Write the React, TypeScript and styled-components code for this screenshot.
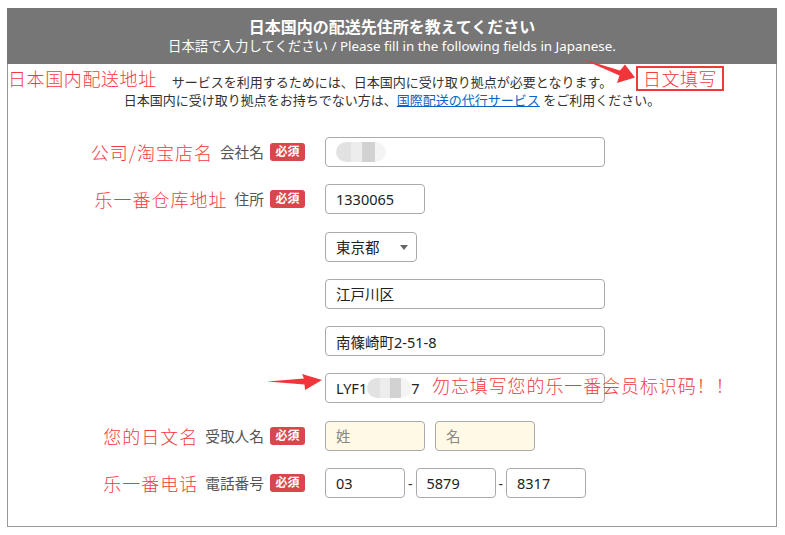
import styled, { createGlobalStyle } from 'styled-components'

const GlobalStyle = createGlobalStyle`
  body {
    margin: 0;
    background: #fff;
    font-family: "Noto Sans", "Noto Sans CJK JP", sans-serif;
    color: #333;
  }
`

const RED = '#f43a40'

const App = () => {
  return (
    <Page>
      <GlobalStyle />
      <Panel>
        <Header>
          <Title>日本国内の配送先住所を教えてください</Title>
          <Subtitle>
            日本語で入力してください / Please fill in the following fields in Japanese.
          </Subtitle>
        </Header>

        <Intro>
          <p>サービスを利用するためには、日本国内に受け取り拠点が必要となります。</p>
          <p>
            日本国内に受け取り拠点をお持ちでない方は、
            <IntroLink href="#">国際配送の代行サービス</IntroLink> をご利用ください。
          </p>
        </Intro>

        <Form>
          <Row>
            <LabelCell>
              <Note>公司/淘宝店名</Note>
              <FieldLabel>会社名</FieldLabel>
              <Badge>必須</Badge>
            </LabelCell>
            <FauxInput $width={280}>
              <Smudge $width={50} />
            </FauxInput>
          </Row>

          <Row>
            <LabelCell>
              <Note>乐一番仓库地址</Note>
              <FieldLabel>住所</FieldLabel>
              <Badge>必須</Badge>
            </LabelCell>
            <Stack>
              <TextInput $width={100} defaultValue="1330065" />
              <SelectWrap>
                <Select defaultValue="tokyo">
                  <option value="tokyo">東京都</option>
                </Select>
              </SelectWrap>
              <TextInput $width={280} defaultValue="江戸川区" />
              <TextInput $width={280} defaultValue="南篠崎町2-51-8" />
              <ReminderSlot>
                <FauxInput $width={280}>
                  <span>LYF1</span>
                  <Smudge $width={44} />
                  <span>7</span>
                </FauxInput>
                <Reminder>勿忘填写您的乐一番会员标识码！！</Reminder>
              </ReminderSlot>
            </Stack>
          </Row>

          <Row>
            <LabelCell>
              <Note>您的日文名</Note>
              <FieldLabel>受取人名</FieldLabel>
              <Badge>必須</Badge>
            </LabelCell>
            <Inline $gap={10}>
              <TextInput $width={100} $tint placeholder="姓" />
              <TextInput $width={100} $tint placeholder="名" />
            </Inline>
          </Row>

          <Row>
            <LabelCell>
              <Note>乐一番电话</Note>
              <FieldLabel>電話番号</FieldLabel>
              <Badge>必須</Badge>
            </LabelCell>
            <Inline $gap={3}>
              <TextInput $width={80} defaultValue="03" />
              <Dash>-</Dash>
              <TextInput $width={80} defaultValue="5879" />
              <Dash>-</Dash>
              <TextInput $width={80} defaultValue="8317" />
            </Inline>
          </Row>
        </Form>
      </Panel>

      <Callout>日本国内配送地址</Callout>
      <Tag>日文填写</Tag>

      <Arrows width="785" height="535" viewBox="0 0 785 535">
        <polygon points="582,59 620,70.5 625,64.5 635,77.5 617,83 619.5,75.5" fill="#f2353a" />
        <polygon points="267,381.5 304,378.5 302,374 322,380 305,390 304.5,384.5" fill="#f2353a" />
      </Arrows>
    </Page>
  )
}

export default App

const Page = styled.div`
  position: relative;
  width: 785px;
  height: 535px;
  overflow: hidden;
`

const Panel = styled.div`
  margin: 8px 0 0 7px;
  width: 770px;
  box-sizing: border-box;
  border: 1px solid #999;
  border-top: none;
  padding-bottom: 28px;
`

const Header = styled.div`
  background: #767676;
  color: #fff;
  text-align: center;
  height: 56px;
  padding-top: 9px;
  box-sizing: border-box;
  margin: 0 -1px;
`

const Title = styled.div`
  font-size: 16px;
  font-weight: 700;
  line-height: 20px;
`

const Subtitle = styled.div`
  font-size: 13.4px;
  line-height: 18px;
`

const Intro = styled.div`
  padding-top: 9px;
  text-align: center;
  font-size: 13px;
  line-height: 18px;
  color: #333;

  p {
    margin: 0;
  }
`

const IntroLink = styled.a`
  color: #0a64c8;
  text-decoration: underline;
`

const Form = styled.div`
  margin-top: 28px;
  display: flex;
  flex-direction: column;
  gap: 17.3px;
`

const Row = styled.div`
  display: grid;
  grid-template-columns: 297px 1fr;
  column-gap: 20px;
  align-items: start;
`

const LabelCell = styled.div`
  height: 30px;
  display: flex;
  align-items: center;
  justify-content: flex-end;
  gap: 6px;
`

const Note = styled.span`
  color: ${RED};
  font-family: "Noto Sans CJK SC", sans-serif;
  font-size: 18px;
  font-weight: 300;
  letter-spacing: 1px;
  margin-right: 1px;
  line-height: 24px;
`

const FieldLabel = styled.span`
  color: #555;
  font-size: 14.7px;
  line-height: 20px;
`

const Badge = styled.span`
  background: #d9474a;
  color: #fff;
  font-size: 12px;
  font-weight: 700;
  line-height: 18px;
  height: 18px;
  padding: 0 5.5px;
  border-radius: 3px;
`

const Stack = styled.div`
  display: flex;
  flex-direction: column;
  gap: 17.3px;
`

const Inline = styled.div<{ $gap: number }>`
  display: flex;
  align-items: center;
  gap: ${(p) => p.$gap}px;
`

const TextInput = styled.input<{ $width: number; $tint?: boolean }>`
  width: ${(p) => p.$width}px;
  height: 30px;
  box-sizing: border-box;
  border: 1px solid #aaa;
  border-radius: 4px;
  padding: 0 10px;
  font-family: "Noto Sans", "Noto Sans CJK JP", sans-serif;
  font-size: 14.5px;
  font-weight: 400;
  color: #222;
  background: ${(p) => (p.$tint ? '#fff9e6' : '#fff')};
  outline: none;

  &::placeholder {
    color: #888;
  }
`

const FauxInput = styled.div<{ $width: number }>`
  width: ${(p) => p.$width}px;
  height: 30px;
  box-sizing: border-box;
  border: 1px solid #aaa;
  border-radius: 4px;
  padding: 0 10px;
  display: flex;
  align-items: center;
  font-size: 14.5px;
  color: #222;
  background: #fff;
`

const Smudge = styled.span<{ $width: number }>`
  display: inline-block;
  width: ${(p) => p.$width}px;
  height: 20px;
  border-radius: 10px;
  background: linear-gradient(
    90deg,
    #e2e2e2 0 30%,
    #ededed 30% 52%,
    #d2d2d2 52% 78%,
    #f4f4f4 78% 100%
  );
  filter: blur(0.6px);
`

const SelectWrap = styled.div`
  position: relative;
  width: 92px;

  &::after {
    content: '';
    position: absolute;
    right: 9px;
    top: 13px;
    border-left: 4.5px solid transparent;
    border-right: 4.5px solid transparent;
    border-top: 5.5px solid #666;
    pointer-events: none;
  }
`

const Select = styled.select`
  appearance: none;
  width: 92px;
  height: 30px;
  box-sizing: border-box;
  border: 1px solid #aaa;
  border-radius: 4px;
  padding: 0 10px;
  font-family: "Noto Sans", "Noto Sans CJK JP", sans-serif;
  font-size: 14.5px;
  font-weight: 400;
  color: #222;
  background: #fff;
  outline: none;
`

const Dash = styled.span`
  font-size: 14px;
  color: #333;
`

const ReminderSlot = styled.div`
  position: relative;
`

const Reminder = styled.span`
  position: absolute;
  left: 107px;
  top: 0;
  white-space: nowrap;
  color: ${RED};
  font-family: "Noto Sans CJK SC", sans-serif;
  font-size: 18px;
  font-weight: 300;
  letter-spacing: 0.9px;
  line-height: 24px;
`

const Callout = styled.span`
  position: absolute;
  left: 8px;
  top: 66px;
  color: ${RED};
  font-family: "Noto Sans CJK SC", sans-serif;
  font-size: 18px;
  font-weight: 300;
  letter-spacing: 0.6px;
  line-height: 24px;
`

const Tag = styled.span`
  position: absolute;
  left: 636px;
  top: 66px;
  width: 88px;
  height: 25px;
  box-sizing: border-box;
  border: 2px solid #f03a3a;
  background: #fff;
  color: ${RED};
  font-family: "Noto Sans CJK SC", sans-serif;
  font-size: 18px;
  font-weight: 300;
  line-height: 20px;
  text-align: center;
  letter-spacing: 0.5px;
`

const Arrows = styled.svg`
  position: absolute;
  left: 0;
  top: 0;
  pointer-events: none;
`
